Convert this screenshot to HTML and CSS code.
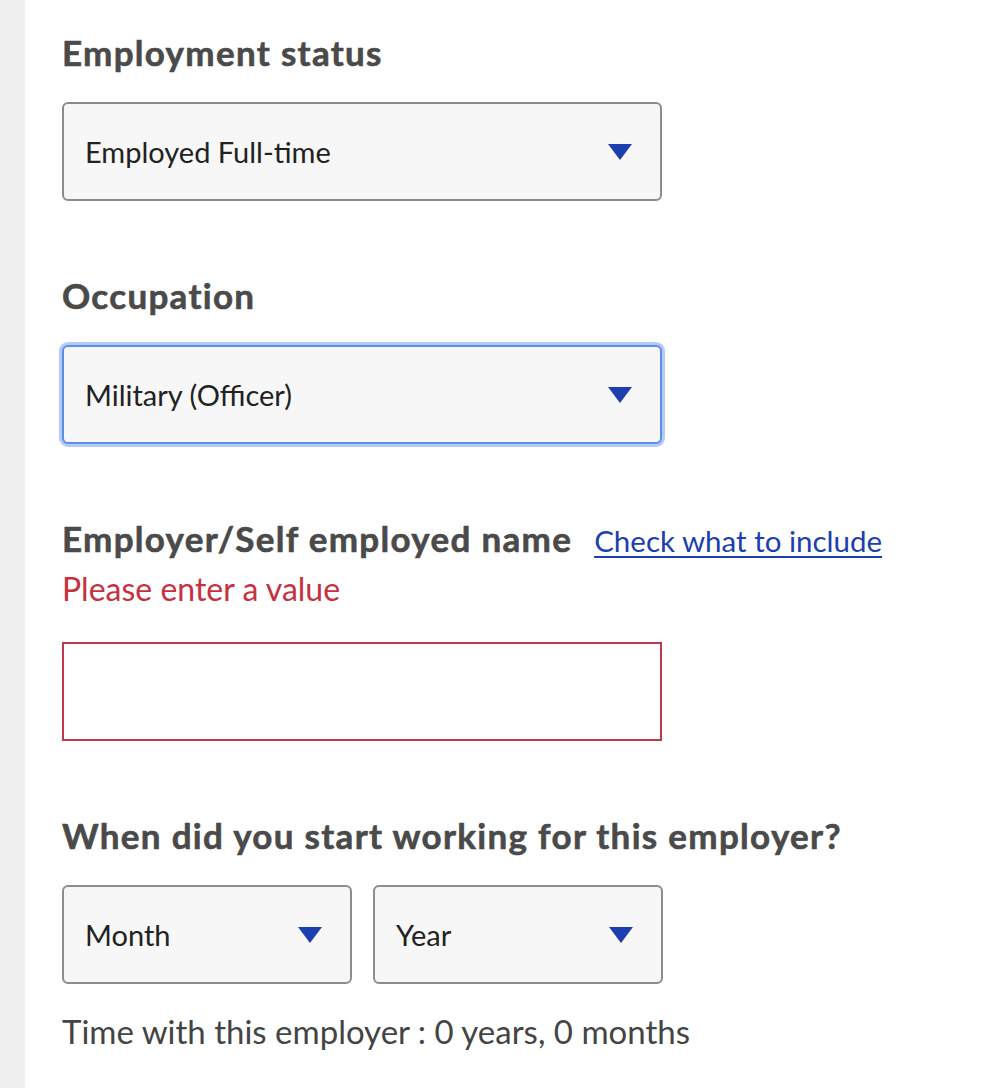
FILE: index.html
```html
<!DOCTYPE html>
<html lang="en">
<head>
<meta charset="utf-8">
<link rel="stylesheet" href="styles.css">
</head>
<body>
<div class="page">
  <div class="rail"></div>
  <main class="form">
    <section class="field">
      <h2 class="label">Employment status</h2>
      <div class="select">
        <span class="value">Employed Full-time</span>
        <svg class="arrow" width="24" height="16" viewBox="0 0 24 16"><polygon points="0,0 24,0 12,16" fill="#1b3fae"/></svg>
      </div>
    </section>
    <section class="field">
      <h2 class="label">Occupation</h2>
      <div class="select focused">
        <span class="value">Military (Officer)</span>
        <svg class="arrow" width="24" height="16" viewBox="0 0 24 16"><polygon points="0,0 24,0 12,16" fill="#1b3fae"/></svg>
      </div>
    </section>
    <section class="field">
      <div class="label-row">
        <h2 class="label">Employer/Self employed name</h2>
        <a class="help" href="#">Check what to include</a>
      </div>
      <p class="error">Please enter a value</p>
      <div class="input invalid"></div>
    </section>
    <section class="field">
      <h2 class="label">When did you start working for this employer?</h2>
      <div class="date-row">
        <div class="select half">
          <span class="value">Month</span>
          <svg class="arrow" width="24" height="16" viewBox="0 0 24 16"><polygon points="0,0 24,0 12,16" fill="#1b3fae"/></svg>
        </div>
        <div class="select half">
          <span class="value">Year</span>
          <svg class="arrow" width="24" height="16" viewBox="0 0 24 16"><polygon points="0,0 24,0 12,16" fill="#1b3fae"/></svg>
        </div>
      </div>
      <p class="hint">Time with this employer : 0 years, 0 months</p>
    </section>
  </main>
</div>
</body>
</html>
```
FILE: styles.css
```css
html, body {
  margin: 0;
  padding: 0;
  background: #ffffff;
}
body {
  font-family: Lato, "Open Sans", sans-serif;
  color: #222222;
}
.page {
  display: flex;
  min-height: 1088px;
}
.rail {
  width: 25px;
  flex: none;
  background: #efefef;
}
.form {
  padding: 30px 0 0 37px;
  display: flex;
  flex-direction: column;
  gap: 72px;
}
.field {
  display: flex;
  flex-direction: column;
}
.label {
  margin: 0 0 28px;
  font-size: 35px;
  line-height: 44px;
  font-weight: 700;
  letter-spacing: 1.3px;
  -webkit-text-stroke: 0.6px #4a4a4a;
  color: #4a4a4a;
  white-space: nowrap;
}
.label-row {
  display: flex;
  align-items: baseline;
  gap: 22px;
}
.label-row .label {
  margin-bottom: 0;
}
.help {
  font-size: 29.5px;
  color: #1b3fae;
  text-decoration: underline;
  text-underline-offset: 4px;
  text-decoration-thickness: 2px;
  white-space: nowrap;
}
.error {
  margin: 9px 0 33px;
  font-size: 32px;
  line-height: 40px;
  color: #c8303f;
}
.select {
  box-sizing: border-box;
  width: 600px;
  height: 99px;
  border: 2px solid #8c8c8c;
  border-radius: 6px;
  background: #f7f7f7;
  display: flex;
  align-items: center;
  justify-content: space-between;
  padding: 0 28px 0 21px;
}
.select.focused {
  border-color: #5b8fe8;
  box-shadow: 0 0 0 3px rgba(120, 160, 240, 0.55);
}
.value {
  font-size: 29px;
  color: #222222;
}
.arrow {
  display: block;
  flex: none;
}
.input {
  box-sizing: border-box;
  width: 600px;
  height: 99px;
  background: #ffffff;
}
.input.invalid {
  border: 2px solid #c0394a;
}
.date-row {
  display: flex;
  gap: 21px;
}
.select.half {
  width: 290px;
}
.hint {
  margin: 27px 0 0;
  font-size: 33px;
  line-height: 40px;
  color: #444444;
}
```
